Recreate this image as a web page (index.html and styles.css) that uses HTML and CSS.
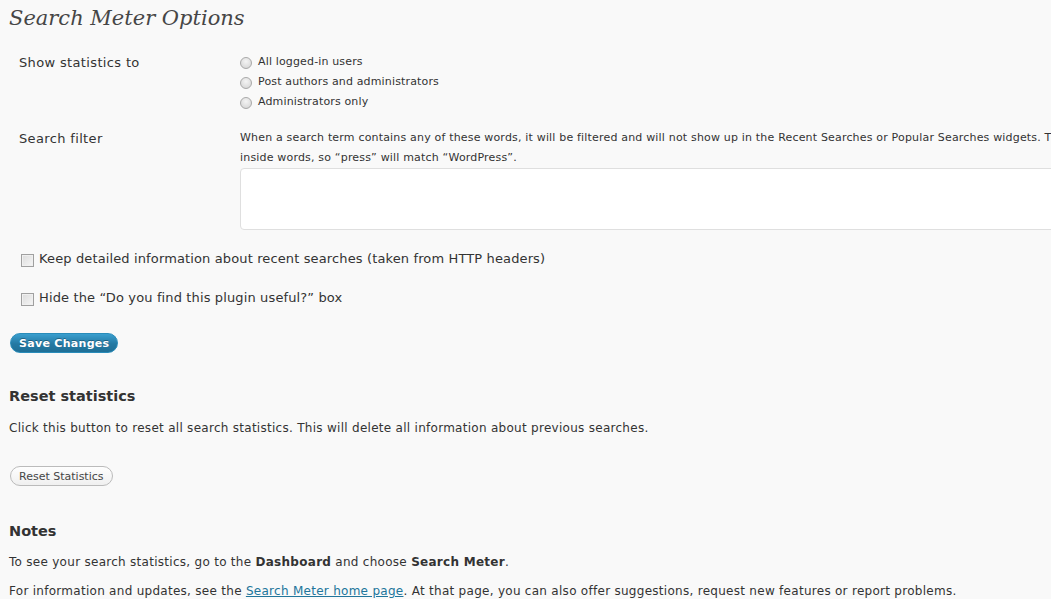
FILE: index.html
```html
<!DOCTYPE html>
<html>
<head>
<meta charset="utf-8">
<title>Search Meter Options</title>
<link rel="stylesheet" href="styles.css">
</head>
<body>
<div class="wrap">
  <h2 class="page-title">Search Meter Options</h2>

  <form class="options">
    <div class="form-row row-stats">
      <div class="row-label">Show statistics to</div>
      <div class="row-field">
        <label class="radio-line"><input type="radio" name="view" class="radio"> All logged-in users</label>
        <label class="radio-line"><input type="radio" name="view" class="radio"> Post authors and administrators</label>
        <label class="radio-line"><input type="radio" name="view" class="radio"> Administrators only</label>
      </div>
    </div>

    <div class="form-row row-filter">
      <div class="row-label">Search filter</div>
      <div class="row-field">
        <p class="description">When a search term contains any of these words, it will be filtered and will not show up in the Recent Searches or Popular Searches widgets. This will match<br>inside words, so “press” will match “WordPress”.</p>
        <textarea class="filter-box"></textarea>
      </div>
    </div>

    <label class="check-line check-first"><input type="checkbox" class="check"> Keep detailed information about recent searches (taken from HTTP headers)</label>
    <label class="check-line"><input type="checkbox" class="check"> Hide the “Do you find this plugin useful?” box</label>

    <div class="submit">
      <button type="button" class="button-primary">Save Changes</button>
    </div>
  </form>

  <h3 class="section-title reset-title">Reset statistics</h3>
  <p class="para">Click this button to reset all search statistics. This will delete all information about previous searches.</p>
  <div class="reset-submit">
    <button type="button" class="button-secondary">Reset Statistics</button>
  </div>

  <h3 class="section-title notes-title">Notes</h3>
  <p class="para">To see your search statistics, go to the <strong>Dashboard</strong> and choose <strong>Search Meter</strong>.</p>
  <p class="para">For information and updates, see the <a href="#" class="link">Search Meter home page</a>. At that page, you can also offer suggestions, request new features or report problems.</p>
</div>
</body>
</html>
```

FILE: styles.css
```css
html, body {
  margin: 0;
  padding: 0;
  background: #f9f9f9;
  overflow: hidden;
}

body {
  font-family: "DejaVu Sans", Verdana, sans-serif;
  color: #333;
  font-size: 12px;
}

.wrap {
  padding-left: 9px;
  width: 1400px;
}

.page-title {
  margin: 0;
  padding: 4px 0 0;
  height: 32px;
  font-family: "DejaVu Serif", Georgia, serif;
  font-style: italic;
  font-weight: normal;
  font-size: 21px;
  line-height: 28px;
  color: #464646;
}

.options {
  margin: 0;
  padding-top: 16px;
}

.form-row {
  display: grid;
  grid-template-columns: 231px 1fr;
}

.row-label {
  padding-left: 10px;
  font-size: 13px;
  line-height: 16px;
  padding-top: 3px;
  letter-spacing: 0.35px;
}

.row-field {
  display: flex;
  flex-direction: column;
}

.radio-line {
  display: flex;
  align-items: center;
  font-size: 11px;
  line-height: 20px;
  height: 20px;
  letter-spacing: 0.15px;
}

.radio {
  appearance: none;
  -webkit-appearance: none;
  width: 12px;
  height: 12px;
  margin: 2px 6px 0 0;
  border-radius: 50%;
  border: 1px solid #a9a9a9;
  background: radial-gradient(circle at 50% 35%, #f4f4f4 0, #dcdcdc 70%, #c8c8c8 100%);
  box-sizing: border-box;
}

.row-filter {
  margin-top: 16px;
}

.row-filter .row-label {
  padding-top: 3px;
}

.description {
  margin: 0;
  font-size: 11px;
  line-height: 20px;
  white-space: nowrap;
  letter-spacing: 0.18px;
}

.filter-box {
  display: block;
  width: 1000px;
  height: 62px;
  margin: 0;
  box-sizing: border-box;
  border: 1px solid #dfdfdf;
  border-radius: 4px;
  background: #fff;
  resize: none;
}

.check-line {
  display: flex;
  align-items: center;
  padding-left: 12px;
  font-size: 13px;
  line-height: 18px;
  height: 18px;
  letter-spacing: 0.13px;
}

.check-first {
  margin-top: 20px;
}

.check-line + .check-line {
  margin-top: 21px;
}

.check {
  appearance: none;
  -webkit-appearance: none;
  width: 13px;
  height: 13px;
  margin: 2px 5px 0 0;
  border: 1px solid #a0a0a0;
  background: linear-gradient(135deg, #dcdcdc, #f6f6f6);
  box-sizing: border-box;
  box-shadow: inset 0 0 0 1px #f0f0f0;
}

.submit {
  padding-top: 26px;
}

.button-primary {
  display: inline-block;
  font-family: "DejaVu Sans", Verdana, sans-serif;
  font-size: 11px;
  font-weight: bold;
  line-height: 13px;
  height: 20px;
  padding: 2px 8px;
  margin-left: 1px;
  color: #fff;
  border: 1px solid #298cba;
  border-radius: 11px;
  background: linear-gradient(#3a9fcf, #2479a3 55%, #1f6f96);
  text-shadow: 0 -1px 0 rgba(0, 0, 0, 0.3);
  letter-spacing: 0.3px;
}

.section-title {
  margin: 0;
  font-size: 14.5px;
  font-weight: bold;
  line-height: 20px;
  color: #333;
}

.reset-title {
  margin-top: 33px;
}

.para {
  margin: 0;
  font-size: 12px;
  line-height: 18px;
  letter-spacing: 0.28px;
}

.reset-title + .para {
  margin-top: 13px;
}

.reset-submit {
  padding-top: 29px;
}

.button-secondary {
  display: inline-block;
  font-family: "DejaVu Sans", Verdana, sans-serif;
  font-size: 11px;
  line-height: 13px;
  height: 20px;
  padding: 2px 8px;
  margin-left: 1px;
  color: #464646;
  border: 1px solid #bbb;
  border-radius: 11px;
  background: linear-gradient(#fefefe, #f0f0f0);
}

.notes-title {
  margin-top: 35px;
}

.notes-title + .para {
  margin-top: 12px;
}

.para + .para {
  margin-top: 11px;
}

.link {
  color: #21759b;
  text-decoration: underline;
}
```
